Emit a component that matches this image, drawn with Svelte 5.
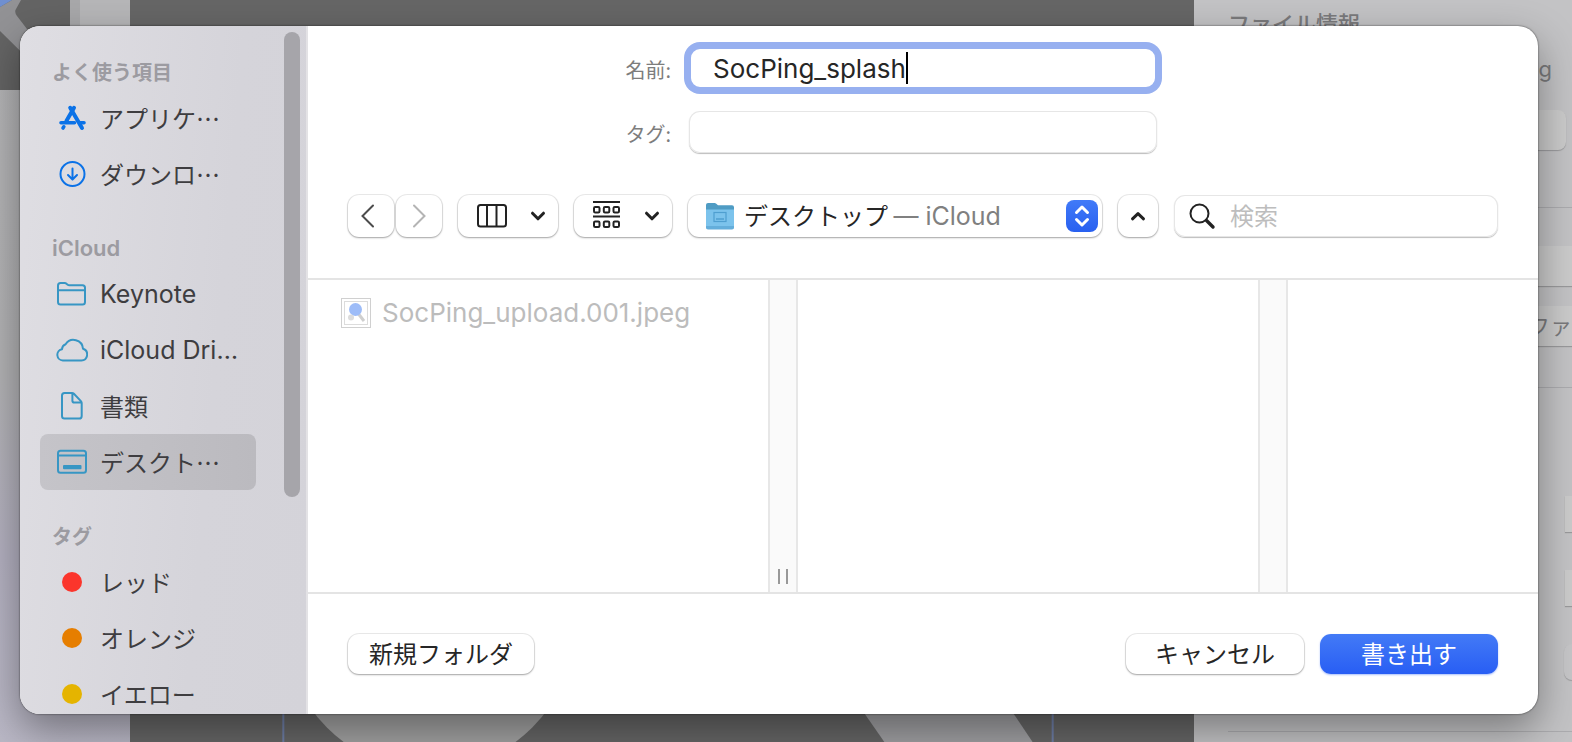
<script>
let filename = $state("SocPing_splash");
let tags = $state("");
let query = $state("");
let selected = $state("desktop");

const sections = [
	{
		title: "よく使う項目",
		items: [
			{ id: "apps", label: "アプリケ…", icon: "apps" },
			{ id: "downloads", label: "ダウンロ…", icon: "download" },
		],
	},
	{
		title: "iCloud",
		items: [
			{ id: "keynote", label: "Keynote", icon: "folder", latin: true },
			{ id: "drive", label: "iCloud Dri…", icon: "cloud", latin: true },
			{ id: "documents", label: "書類", icon: "doc" },
			{ id: "desktop", label: "デスクト…", icon: "desktop" },
		],
	},
	{
		title: "タグ",
		items: [
			{ id: "red", label: "レッド", color: "#fb352c" },
			{ id: "orange", label: "オレンジ", color: "#e67e00" },
			{ id: "yellow", label: "イエロー", color: "#e5b400" },
		],
	},
];
</script>

{#snippet sideIcon(name)}
  <svg class="side-icon" class:blue={name === "apps" || name === "download"} viewBox="0 0 32 32" aria-hidden="true">
    {#if name === "apps"}
      <g stroke-width="4">
        <path d="M18 5.800 10.400 19" />
        <path d="M14.200 5.800 26 26" />
        <path d="M5 20.800h13.500M24.500 20.800H28" stroke-width="3.600" />
        <path d="M7.800 24.800 7 26" stroke-width="3.600" />
      </g>
    {:else if name === "download"}
      <circle cx="16.500" cy="16" r="12" />
      <path d="M16.500 10.500v10.500M12 17l4.500 4.500L21 17" />
    {:else if name === "folder"}
      <path d="M2 7.500Q2 5 4.500 5h4.200q1 0 1.800.7l1.200 1q.7.600 1.700.600H26.500Q29 7.300 29 9.800V24q0 2.500-2.500 2.500h-22Q2 26.500 2 24zM2 12.300h27" />
    {:else if name === "cloud"}
      <path d="M6.800 26.500h18.600a6 6 0 0 0 1.600-11.700A9.500 9.500 0 0 0 9.600 10.200 5.600 5.600 0 0 0 6 15.200 5.700 5.700 0 0 0 6.800 26.500z" />
    {:else if name === "doc"}
      <path d="M8.500 3h7.600q1 0 1.800.8l7 7.300q.8.800.8 1.800v13q0 2.600-2.600 2.600H8.500Q6 28.500 6 26V5.500Q6 3 8.500 3zM16.400 3.300v7.400q0 1.800 1.800 1.800h7.200" />
    {:else}
      <rect x="2" y="4.800" width="28" height="22" rx="2.500" />
      <path d="M2 9.500h28" />
      <rect class="solid" x="7" y="19" width="18.500" height="4.200" rx="1" />
    {/if}
  </svg>
{/snippet}

{#snippet chevron(up)}
  <svg class="chevron" viewBox="0 0 16 16" aria-hidden="true">
    <path d={up ? "M2.500 10.800 8 5.600l5.500 5.200" : "M2.500 5.200 8 10.800l5.500-5.600"} />
  </svg>
{/snippet}

<div class="desktop" lang="ja">
  <!-- dimmed editor window behind the sheet -->
  <div class="editor" inert>
    <div class="slides">
      <svg class="thumb" viewBox="0 0 70 90">
        <rect width="70" height="90" fill="#646464" />
        <path d="M21 0 16 9Q14 12 17 16L70 85V100L0 31V7L12 0z" fill="#929295" />
        <path d="M0 0h12L0 7z" fill="#6f8fd0" />
      </svg>
      <div class="slide-gutter"></div>
    </div>
    <div class="canvas">
      <svg viewBox="0 0 1062 44">
        <circle cx="299" cy="-73" r="145" fill="#a2a2a2" />
        <path d="M721-2H870L901 44H753z" fill="#a0a0a3" />
        <path d="M153 0v44M921 0v44" stroke="#6f7fa8" stroke-width="2" />
      </svg>
    </div>
    <div class="inspector">
      <div class="info-title">ファイル情報</div>
      <div class="info-name">g</div>
      <input class="info-field round" aria-label="説明" />
      <hr />
      <input class="info-field wide" aria-label="種類" />
      <button class="info-button">ファ</button>
      <hr />
      <div class="info-tail">
        <input class="info-field" aria-label="幅" />
        <input class="info-field" aria-label="高さ" />
        <button class="info-button soft" aria-label="追加"></button>
      </div>
      <hr />
    </div>
  </div>

  <div class="sheet" role="dialog" aria-label="書き出す">
    <aside class="sidebar">
      <nav class="places">
        {#each sections as section}
          <h2 class:latin={section.title === "iCloud"}>{section.title}</h2>
          {#each section.items as item}
            <button
              class="place"
              class:latin={item.latin}
              class:selected={selected === item.id}
              onclick={() => (selected = item.id)}
            >
              {#if item.color}
                <span class="dot" style="background: {item.color}"></span>
              {:else}
                {@render sideIcon(item.icon)}
              {/if}
              <span class="place-name">{item.label}</span>
            </button>
          {/each}
        {/each}
      </nav>
      <div class="scrollbar"></div>
    </aside>

    <main class="panel">
      <div class="form">
        <label for="name">名前:</label>
        <div class="field focused">
          <input id="name" type="text" bind:value={filename} />
          <span class="caret"></span>
        </div>
        <label for="tags">タグ:</label>
        <div class="field">
          <input id="tags" class="grow" type="text" bind:value={tags} />
        </div>
      </div>

      <div class="toolbar">
        <div class="history">
          <button class="btn" aria-label="戻る">
            <svg class="arrow" viewBox="0 0 24 24"><path d="M14 1.500 3.500 12 14 22.500" /></svg>
          </button>
          <button class="btn" aria-label="進む">
            <svg class="arrow dim" viewBox="0 0 24 24"><path d="M7 1.500 17.500 12 7 22.500" /></svg>
          </button>
        </div>
        <button class="btn menu view" aria-label="表示">
          <svg class="glyph" viewBox="0 0 32 32">
            <rect x="2" y="5" width="28" height="21.500" rx="2.500" />
            <path d="M11 5v21.500M20.500 5v21.500" />
          </svg>
          {@render chevron(false)}
        </button>
        <button class="btn menu group" aria-label="グループ">
          <svg class="glyph" viewBox="0 0 32 32">
            <path d="M1 2h27M1 16.500h27" />
            <rect x="2" y="7" width="5.500" height="5.500" rx="1.200" />
            <rect x="11.800" y="7" width="5.500" height="5.500" rx="1.200" />
            <rect x="21.500" y="7" width="5.500" height="5.500" rx="1.200" />
            <rect x="2" y="21.500" width="5.500" height="5.500" rx="1.200" />
            <rect x="11.800" y="21.500" width="5.500" height="5.500" rx="1.200" />
            <rect x="21.500" y="21.500" width="5.500" height="5.500" rx="1.200" />
          </svg>
          {@render chevron(false)}
        </button>
        <div class="btn location">
          <svg class="folder" viewBox="0 0 32 32" aria-hidden="true">
            <path d="M2 5Q2 3 4 3h6.500q1 0 1.800.7L14 5.200h14q2 0 2 2V14H2z" fill="#4f9cc4" />
            <path d="M2 9.500h28V27q0 2-2 2H4q-2 0-2-2z" fill="#7cc3ec" />
            <path d="M2 26h28v1.500q0 2-2 2H4q-2 0-2-2z" fill="#64aedb" />
            <rect x="10" y="12.500" width="12" height="9" fill="none" stroke="#4f9fd0" stroke-width="1.200" />
            <path d="M12 19h8" stroke="#4f9fd0" stroke-width="1.500" />
          </svg>
          <span class="where">デスクトップ <span class="origin">— iCloud</span></span>
          <svg class="stepper" viewBox="0 0 32 32" aria-hidden="true">
            <path d="M10.500 12.500 16 7l5.500 5.500M10.500 19.500 16 25l5.500-5.500" />
          </svg>
          <select aria-label="場所">
            <option value="desktop">デスクトップ</option>
          </select>
        </div>
        <button class="btn up" aria-label="折りたたむ">{@render chevron(true)}</button>
        <label class="field search">
          <svg class="loupe" viewBox="0 0 28 28">
            <circle cx="11.500" cy="11.500" r="9" />
            <path d="M18.500 18.500 25 25" stroke-width="3.400" />
          </svg>
          <input type="text" placeholder="検索" aria-label="検索" bind:value={query} />
        </label>
      </div>

      <div class="browser">
        <div class="column">
          <div class="file">
            <svg viewBox="0 0 32 32" aria-hidden="true">
              <rect class="page" x="1.500" y="1.500" width="29" height="29" />
              <rect x="4.500" y="4.500" width="23" height="23" fill="#fff" stroke="#dcdcdc" />
              <path d="M17 15 24 24" stroke="#cfcfcf" stroke-width="3" />
              <circle cx="15.500" cy="12.500" r="6.500" fill="#9dbcf8" />
              <circle cx="11" cy="20.500" r="3" fill="#dcdcdc" />
            </svg>
            <span>SocPing_upload.001.jpeg</span>
          </div>
        </div>
        <div class="gutter"><span class="grip"></span></div>
        <div class="column"></div>
        <div class="gutter"></div>
        <div class="column"></div>
      </div>

      <footer>
        <button class="btn new-folder">新規フォルダ</button>
        <button class="btn action">キャンセル</button>
        <button class="btn action primary">書き出す</button>
      </footer>
    </main>
  </div>
</div>

<style>
  :global(body) { margin: 0; background: #b4b4b7; }

  .desktop {
    display: grid; grid-template-columns: minmax(0, 1fr);
    height: 100vh; overflow: hidden;
    font-family: "Noto Sans CJK JP", sans-serif; font-size: 24px; color: #262626;
  }
  .desktop * { box-sizing: border-box; }
  .editor, .sheet { grid-area: 1 / 1; min-height: 0; }
  button, input, select { font: inherit; color: inherit; }
  button { border: 0; padding: 0; white-space: nowrap; }
  svg { display: block; fill: none; flex: none; }

  /* editor window */
  .editor { display: flex; overflow: hidden; }
  .slides { flex: 0 0 130px; display: flex; background: linear-gradient(#b4b4b6, #b2b2b4 50%, #b3b0c0 75%, #bab8c6); }
  .thumb { width: 70px; height: 90px; }
  .slide-gutter { flex: 1; height: 90px; background: linear-gradient(90deg, #a8a8aa 10px, #b6b6b8 10px); }
  .canvas { flex: 1; min-width: 0; display: flex; flex-direction: column; justify-content: flex-end; background: #666; }
  .canvas svg { width: 100%; }
  .inspector {
    flex: 0 0 378px; display: flex; flex-direction: column;
    padding-left: 34px; background: #c3c3c5; color: #7a7a7c; font-size: 22px;
  }
  .info-title { height: 46px; line-height: 44px; font-weight: 500; }
  .info-name { height: 64px; line-height: 46px; padding-right: 20px; text-align: right; font-family: Inter, sans-serif; }
  .inspector hr { flex: none; width: 100%; height: 1px; margin: 0; border: 0; background: #acacaf; }
  .info-field, .info-button {
    flex: none; height: 40px; border: 0; background: #cbcbcb;
    box-shadow: 0 1px 1px #9a9a9c;
  }
  .round { margin: 0 6px 57px 0; border-radius: 8px; }
  .wide { margin: 38px 0 20px; }
  .info-button { margin-bottom: 41px; padding-bottom: 4px; text-align: right; }
  .info-tail { display: flex; flex-direction: column; align-items: flex-end; gap: 38px; height: 343px; padding-top: 108px; }
  .info-tail > * { width: 7px; height: 36px; margin: 0; padding: 0; }
  .info-tail .soft { width: 8px; border-radius: 8px 0 0 8px; background: #c6c6c8; }

  /* sheet */
  .sheet {
    display: flex; margin: 26px 34px 28px 20px; overflow: hidden;
    border-radius: 20px; background: #fff;
    box-shadow: 0 0 2px rgba(0, 0, 0, 0.7), 0 16px 40px rgba(0, 0, 0, 0.38);
  }
  .sidebar {
    flex: 0 0 288px; display: flex; min-height: 0; overflow: hidden;
    border-right: 2px solid #e3e2e5;
    background: linear-gradient(95deg, #dfdee3, #d5d4da 65%, #d4d3d9);
  }
  .places { flex: 1; padding-left: 20px; }
  .places h2 {
    margin: 28px 0 0; padding-left: 12px;
    font-size: 20px; line-height: 36px; font-weight: 700; color: #9c9ba1;
  }
  .places h2.latin { font-size: 22px; font-weight: 600; }
  .place {
    display: flex; align-items: center; gap: 12px;
    width: 216px; height: 56px; padding: 0 16px;
    border-radius: 8px; background: none; color: #3e3d40;
  }
  .place-name { padding-bottom: 2px; }
  .place.selected { background: linear-gradient(90deg, #c5c4c9, #bbbabf); }
  .latin { font-family: Inter, sans-serif; font-size: 25px; }
  .latin .place-name { padding: 0; }
  .side-icon { width: 32px; height: 32px; stroke: #3796c4; stroke-width: 2; stroke-linecap: round; stroke-linejoin: round; }
  .side-icon.blue { stroke: #0b72e7; }
  .side-icon .solid { fill: #3796c4; stroke: none; }
  .dot { width: 20px; height: 20px; margin: 0 6px; border-radius: 50%; }
  .scrollbar { width: 16px; height: 465px; margin: 6px; border-radius: 8px; background: #a6a5aa; }

  .panel { flex: 1; min-width: 0; display: flex; flex-direction: column; }
  .form {
    display: grid; grid-template-columns: 1fr 468px 1fr;
    column-gap: 18px; row-gap: 22px; padding: 21px 0 42px;
  }
  .form label { grid-column: 1; justify-self: end; font-size: 20px; line-height: 46px; height: 42px; color: #7d7d7d; }
  .field {
    display: flex; align-items: center; height: 42px; padding: 0 22px;
    border-radius: 11px; background: #fff; font-family: Inter, "Noto Sans CJK JP", sans-serif;
    box-shadow: inset 0 0 0 1px #e6e6e6, 0 1px 1px #bdbdbd;
  }
  .field input { min-width: 0; padding: 0; border: 0; outline: 0; background: none; }
  .focused { border: 2px solid #97b0f0; box-shadow: 0 0 0 5px #97b0f0; font-size: 26px; }
  .focused input { field-sizing: content; caret-color: transparent; }
  .grow { flex: 1; }
  .caret { width: 2px; height: 32px; background: #000; }

  .btn {
    display: flex; align-items: center; justify-content: center;
    height: 42px; border-radius: 11px; background: #fff;
    box-shadow: 0 0 0 1px rgba(0, 0, 0, 0.08), 0 1px 2px rgba(0, 0, 0, 0.3);
  }
  .toolbar { display: flex; gap: 16px; padding: 0 40px 41px; }
  .history { display: flex; gap: 2px; }
  .history .btn { width: 46px; }
  .arrow { width: 24px; height: 24px; stroke: #4c4c4c; stroke-width: 2; stroke-linecap: round; }
  .dim { stroke: #b4b4b4; }
  .menu { justify-content: space-between; padding: 0 12px 0 18px; }
  .view { width: 100px; }
  .group { width: 98px; }
  .glyph { width: 32px; height: 32px; stroke: #222; stroke-width: 2; }
  .chevron { width: 16px; height: 16px; stroke: #222; stroke-width: 3; stroke-linecap: round; stroke-linejoin: round; }
  .up { width: 40px; }

  .location { position: relative; flex: 1; min-width: 0; justify-content: flex-start; padding: 0 4px 0 16px; }
  .location select { position: absolute; inset: 0; width: 100%; opacity: 0; }
  .folder { width: 32px; height: 32px; }
  .where { flex: 1; padding: 0 0 4px 8px; white-space: nowrap; }
  .origin { font-family: Inter, sans-serif; font-size: 25px; color: #808080; }
  .stepper {
    width: 32px; height: 32px; border-radius: 8px;
    background: linear-gradient(#417af8, #2860f0);
    stroke: #fff; stroke-width: 3; stroke-linecap: round; stroke-linejoin: round;
  }
  .search { flex: none; width: 324px; gap: 14px; padding: 0 14px; }
  .search input { flex: 1; }
  .search input::placeholder { color: #bdbdbd; }
  .loupe { width: 28px; height: 28px; stroke: #222; stroke-width: 2; stroke-linecap: round; }

  .browser {
    flex: 1; min-height: 0; display: grid;
    grid-template-columns: 460px 30px 460px 30px 1fr;
    border: solid #e4e4e4; border-width: 2px 0;
  }
  .column { min-width: 0; }
  .file {
    display: flex; align-items: center; gap: 10px; padding: 17px 32px;
    font-family: Inter, sans-serif; font-size: 26px; line-height: 32px; color: #bcbcbc;
  }
  .file svg { width: 32px; height: 32px; }
  .page { fill: #fff; stroke: #d0d0d0; }
  .gutter {
    display: flex; align-items: flex-end; justify-content: center; padding-bottom: 8px;
    border: solid #e7e7e7; border-width: 0 2px; background: #fafafa;
  }
  .grip { width: 10px; height: 15px; border: solid #999; border-width: 0 2px; }

  footer { display: flex; gap: 16px; padding: 40px; }
  footer .btn { height: 40px; padding-bottom: 4px; }
  .new-folder { width: 186px; margin-right: auto; }
  .action { width: 178px; }
  .primary { color: #fff; background: linear-gradient(#437af6, #285ef4); box-shadow: 0 1px 2px rgba(40, 94, 244, 0.4); }
</style>
